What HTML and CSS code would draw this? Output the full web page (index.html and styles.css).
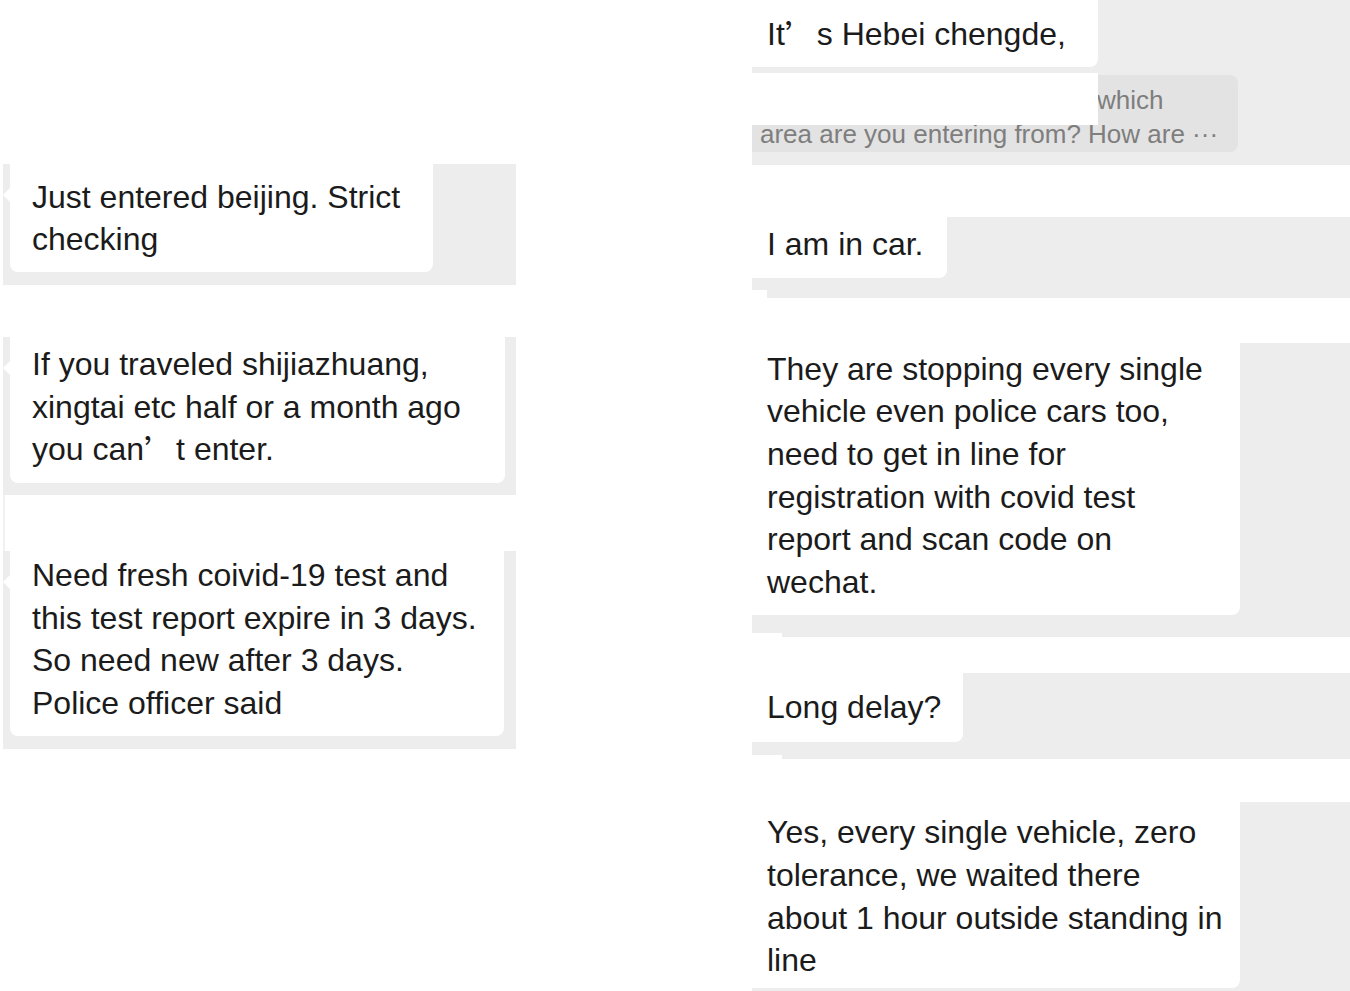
FILE: index.html
```html
<!DOCTYPE html>
<html lang="en">
<head>
<meta charset="utf-8">
<title>Chat collage</title>
<link rel="stylesheet" href="styles.css">
</head>
<body>
<div class="collage">
  <div class="col col-left">
    <div class="lpanel lp1">
      <div class="lbubble lb1"><span class="tail"></span>Just entered beijing. Strict<br>checking</div>
    </div>
    <div class="lpanel lp2">
      <div class="lbubble lb2"><span class="tail"></span>If you traveled shijiazhuang,<br>xingtai etc half or a month ago<br>you can<span class="cjk">’</span>t enter.</div>
    </div>
    <div class="gapline"></div>
    <div class="lpanel lp3">
      <div class="lbubble lb3"><span class="tail"></span>Need fresh coivid-19 test and<br>this test report expire in 3 days.<br>So need new after 3 days.<br>Police officer said</div>
    </div>
  </div>

  <div class="col col-right">
    <div class="r1">
      <div class="r1-top">
        <div class="rbubble rb1">It<span class="cjk">’</span>s Hebei chengde,</div>
      </div>
      <div class="quote"><span class="q1">which</span>area are you entering from? How are ···</div>
      <div class="cover"></div>
    </div>

    <div class="rpanel rp2">
      <div class="rbubble rb2">I am in car.</div>
    </div>

    <div class="rpanel rp3">
      <div class="rbubble rb3">They are stopping every single<br>vehicle even police cars too,<br>need to get in line for<br>registration with covid test<br>report and scan code on<br>wechat.</div>
    </div>

    <div class="rpanel rp4">
      <div class="rbubble rb4">Long delay?</div>
    </div>

    <div class="rpanel rp5">
      <div class="rbubble rb5">Yes, every single vehicle, zero<br>tolerance, we waited there<br>about 1 hour outside standing in<br>line</div>
    </div>
  </div>
</div>
</body>
</html>
```

FILE: styles.css
```css
html, body {
  margin: 0;
  padding: 0;
  background: #ffffff;
}

body {
  font-family: "Liberation Sans", Arial, "Noto Sans CJK SC", sans-serif;
  font-size: 32px;
  line-height: 42.7px;
  color: #1b1b1b;
}

.collage {
  display: flex;
  width: 1350px;
  height: 991px;
  overflow: hidden;
}

.col {
  display: flex;
  flex-direction: column;
  flex: none;
}

.col > * {
  flex: none;
}

.cjk {
  font-family: "Noto Sans CJK SC", sans-serif;
  line-height: 0;
  position: relative;
  top: 3px;
}

/* ---------- left column ---------- */
.col-left {
  width: 513px;
  margin-left: 3px;
  padding-top: 164px;
}

.lpanel {
  background: #ededed;
  padding-left: 7px;
}

.lbubble {
  position: relative;
  box-sizing: border-box;
  background: #ffffff;
  border-radius: 0 0 8px 8px;
  padding-left: 22px;
  white-space: nowrap;
}

.tail {
  position: absolute;
  left: -7px;
  top: 24px;
  width: 0;
  height: 0;
  border-top: 7px solid transparent;
  border-bottom: 7px solid transparent;
  border-right: 7px solid #ffffff;
}

.lp1 {
  padding-bottom: 13px;
}
.lb1 {
  width: 423px;
  padding-top: 11.5px;
  padding-bottom: 11px;
}

.lp2 {
  margin-top: 52px;
  padding-bottom: 12px;
}
.lb2 {
  width: 495px;
  padding-top: 6px;
  padding-bottom: 11.5px;
}

.gapline {
  width: 2px;
  height: 56px;
  background: #f1f1f1;
}

.lp3 {
  padding-bottom: 13px;
}
.lb3 {
  width: 494px;
  padding-top: 3.5px;
  padding-bottom: 11px;
}

/* ---------- right column ---------- */
.col-right {
  width: 598px;
  margin-left: 236px;
}

.rbubble {
  box-sizing: border-box;
  background: #ffffff;
  border-radius: 0 0 8px 0;
  padding-left: 15px;
  white-space: nowrap;
}

.r1 {
  position: relative;
  height: 165px;
  background: #ededed;
}

.r1-top {
  display: flex;
}

.rb1 {
  width: 346px;
  height: 67px;
  padding-top: 13px;
}

.quote {
  box-sizing: border-box;
  width: 486px;
  height: 77px;
  margin-top: 8px;
  padding: 8px 0 0 8px;
  background: #e3e3e3;
  border-radius: 0 8px 8px 0;
  font-size: 26px;
  line-height: 34px;
  color: #7e7e7e;
  white-space: nowrap;
}

.q1 {
  display: block;
  padding-left: 337px;
}

.cover {
  position: absolute;
  left: 0;
  top: 73px;
  width: 346px;
  height: 52px;
  background: #ffffff;
}

.rpanel {
  position: relative;
  display: flex;
  background: #ededed;
}

.rpanel::after {
  content: "";
  position: absolute;
  left: 0;
  bottom: 0;
  width: 30px;
  height: 4px;
  background: #ffffff;
}

.rp2 {
  margin-top: 52px;
  padding-bottom: 20px;
}
.rp2::after {
  width: 15px;
  height: 8px;
}
.rb2 {
  width: 195px;
  height: 61px;
  padding-top: 5.6px;
}

.rp3 {
  margin-top: 45px;
  padding-bottom: 22px;
}
.rb3 {
  width: 488px;
  padding-top: 4.5px;
  padding-bottom: 11px;
}

.rp4 {
  margin-top: 36px;
  padding-bottom: 17px;
}
.rb4 {
  width: 211px;
  height: 69px;
  padding-top: 13.6px;
}

.rp5 {
  margin-top: 43px;
  padding-bottom: 10px;
}
.rp5::after {
  display: none;
}
.rb5 {
  width: 488px;
  padding-top: 9.5px;
  padding-bottom: 6px;
}
```
